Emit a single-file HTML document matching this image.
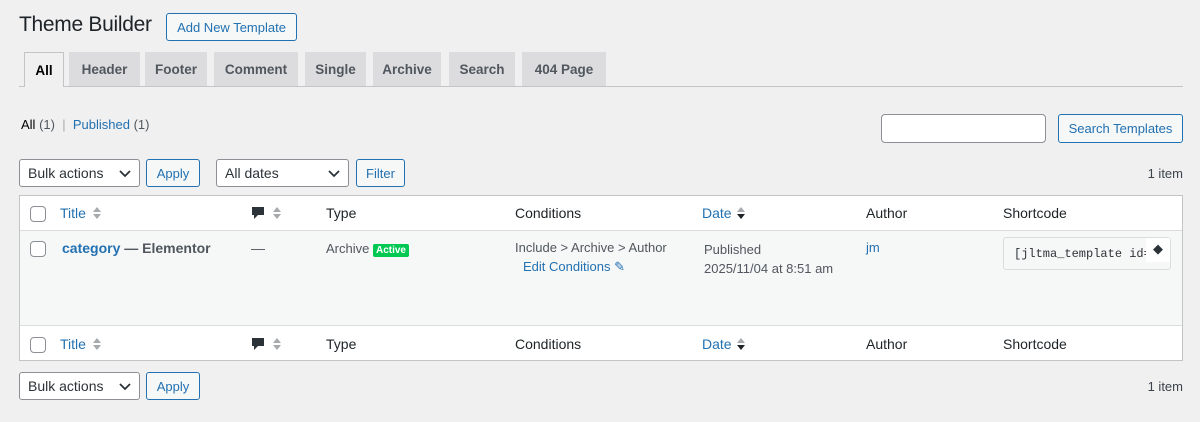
<!DOCTYPE html>
<html><head><meta charset="utf-8"><style>
*{box-sizing:border-box;margin:0;padding:0}
body{width:1200px;height:422px;background:#f0f0f1;font-family:"Liberation Sans",sans-serif;font-size:13px;color:#3c434a;position:relative;overflow:hidden}
.a{position:absolute}
.btn{position:absolute;border:1px solid #2271b1;color:#2271b1;background:#f6f7f7;border-radius:3px;display:flex;align-items:center;justify-content:center;font-size:13px}
.sel{position:absolute;border:1px solid #8c8f94;background:#fff;border-radius:3px;display:flex;align-items:center;padding-left:8px;font-size:14px;color:#2c3338}
.sel svg{position:absolute;right:8px;top:10px}
.tab{position:absolute;top:52px;height:34px;background:#dcdcde;border:1px solid #dcdcde;border-bottom:none;display:flex;align-items:center;justify-content:center;font-weight:bold;font-size:13.5px;color:#50575e}
.cb{position:absolute;width:16px;height:16px;border:1px solid #8c8f94;border-radius:4px;background:#fff}
.h{position:absolute;font-size:14px;color:#1d2327}
.lk,.h.lk{color:#2271b1}
.srt{position:absolute}
</style></head><body>
<div class="a" style="left:19px;top:13px;font-size:21px;letter-spacing:-0.3px;color:#1d2327">Theme Builder</div>
<div class="btn" style="left:166px;top:13px;width:131px;height:28px">Add New Template</div>
<div class="a" style="left:19px;top:86px;width:1164px;height:1px;background:#c3c4c7"></div>
<div class="tab" style="left:24px;width:40px;height:35px;background:#f0f0f1;border-color:#c3c4c7;color:#000">All</div>
<div class="tab" style="left:69px;width:71px">Header</div>
<div class="tab" style="left:145px;width:62px">Footer</div>
<div class="tab" style="left:214px;width:84px">Comment</div>
<div class="tab" style="left:305px;width:61px">Single</div>
<div class="tab" style="left:373px;width:68px">Archive</div>
<div class="tab" style="left:449px;width:66px">Search</div>
<div class="tab" style="left:522px;width:84px">404 Page</div>
<div class="a" style="left:21px;top:117px;font-size:13px"><span style="color:#000">All</span> <span style="color:#50575e">(1)</span> &nbsp;<span style="color:#a7aaad">|</span>&nbsp; <span class="lk">Published</span> <span style="color:#50575e">(1)</span></div>
<div class="a" style="left:881px;top:114px;width:165px;height:29px;border:1px solid #8c8f94;border-radius:4px;background:#fff"></div>
<div class="btn" style="left:1058px;top:114px;width:125px;height:29px">Search Templates</div>
<div class="sel" style="left:19px;top:159px;width:121px;height:28px">Bulk actions<svg width="12" height="8"><path d="M1 1l5 5 5-5" stroke="#2c3338" stroke-width="1.8" fill="none"/></svg></div>
<div class="btn" style="left:146px;top:159px;width:54px;height:28px">Apply</div>
<div class="sel" style="left:216px;top:159px;width:133px;height:28px">All dates<svg width="12" height="8"><path d="M1 1l5 5 5-5" stroke="#2c3338" stroke-width="1.8" fill="none"/></svg></div>
<div class="btn" style="left:356px;top:159px;width:49px;height:28px">Filter</div>
<div class="a" style="right:17px;top:166px">1 item</div>
<div class="a" style="left:19px;top:195px;width:1164px;height:166px;border:1px solid #c3c4c7;background:#fff"></div>
<div class="a" style="left:20px;top:230px;width:1162px;height:96px;background:#f6f7f7;border-top:1px solid #dcdcde;border-bottom:1px solid #dcdcde"></div>
<!-- header -->
<div class="cb" style="left:30px;top:206px"></div>
<div class="h lk" style="left:60px;top:205px">Title</div>
<svg class="srt" style="left:92px;top:206px" width="10" height="14"><path d="M1 6l4-5 4 5z M1 8l4 5 4-5z" fill="#a7aaad"/></svg>
<svg class="a" style="left:251px;top:206px" width="14" height="14"><path d="M1 1h12v8H7l-4 4V9H1z" fill="#2c3338"/></svg>
<svg class="srt" style="left:272px;top:206px" width="10" height="14"><path d="M1 6l4-5 4 5z M1 8l4 5 4-5z" fill="#a7aaad"/></svg>
<div class="h" style="left:326px;top:205px">Type</div>
<div class="h" style="left:515px;top:205px">Conditions</div>
<div class="h lk" style="left:702px;top:205px">Date</div>
<svg class="srt" style="left:736px;top:206px" width="10" height="14"><path d="M1 6l4-5 4 5z" fill="#a7aaad"/><path d="M1 8l4 5 4-5z" fill="#1d2327"/></svg>
<div class="h" style="left:866px;top:205px">Author</div>
<div class="h" style="left:1003px;top:205px">Shortcode</div>
<!-- row -->
<div class="cb" style="left:30px;top:241px"></div>
<div class="h" style="left:62px;top:240px;font-weight:bold;color:#50575e"><span class="lk">category</span> — Elementor</div>
<div class="h" style="left:251px;top:240px;color:#50575e">—</div>
<div class="a" style="left:326px;top:241px;color:#50575e">Archive <span style="background:#00c853;color:#fff;font-size:10px;font-weight:bold;padding:1px 3px;border-radius:2px">Active</span></div>
<div class="a" style="left:515px;top:240px;color:#50575e">Include &gt; Archive &gt; Author</div>
<div class="a lk" style="left:523px;top:259px">Edit Conditions <span>✎</span></div>
<div class="a" style="left:704px;top:240px;color:#50575e;line-height:19px">Published<br>2025/11/04 at 8:51 am</div>
<div class="a lk" style="left:866px;top:240px">jm</div>
<div class="a" style="left:1003px;top:237px;width:168px;height:33px;border:1px solid #dcdcde;background:#f6f7f7;border-radius:3px;font-family:'Liberation Mono',monospace;font-size:12px;padding:9px 0 0 10px;color:#2c3338;overflow:hidden;white-space:nowrap">[jltma_template id=</div>
<div class="a" style="left:1146px;top:238px;width:24px;height:24px;background:#fff;color:#2c3338;font-size:13px;text-align:center;line-height:22px">◆</div>
<!-- footer -->
<div class="cb" style="left:30px;top:337px"></div>
<div class="h lk" style="left:60px;top:336px">Title</div>
<svg class="srt" style="left:92px;top:337px" width="10" height="14"><path d="M1 6l4-5 4 5z M1 8l4 5 4-5z" fill="#a7aaad"/></svg>
<svg class="a" style="left:251px;top:337px" width="14" height="14"><path d="M1 1h12v8H7l-4 4V9H1z" fill="#2c3338"/></svg>
<svg class="srt" style="left:272px;top:337px" width="10" height="14"><path d="M1 6l4-5 4 5z M1 8l4 5 4-5z" fill="#a7aaad"/></svg>
<div class="h" style="left:326px;top:336px">Type</div>
<div class="h" style="left:515px;top:336px">Conditions</div>
<div class="h lk" style="left:702px;top:336px">Date</div>
<svg class="srt" style="left:736px;top:337px" width="10" height="14"><path d="M1 6l4-5 4 5z" fill="#a7aaad"/><path d="M1 8l4 5 4-5z" fill="#1d2327"/></svg>
<div class="h" style="left:866px;top:336px">Author</div>
<div class="h" style="left:1003px;top:336px">Shortcode</div>
<div class="sel" style="left:19px;top:372px;width:121px;height:28px">Bulk actions<svg width="12" height="8"><path d="M1 1l5 5 5-5" stroke="#2c3338" stroke-width="1.8" fill="none"/></svg></div>
<div class="btn" style="left:146px;top:372px;width:54px;height:28px">Apply</div>
<div class="a" style="right:17px;top:379px">1 item</div>
</body></html>
